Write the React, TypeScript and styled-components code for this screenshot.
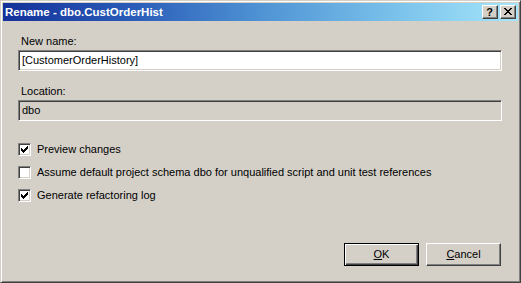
import React from "react";
import styled, { createGlobalStyle } from "styled-components";

const Global = createGlobalStyle`
  html, body { margin: 0; padding: 0; background: #d4d0c8; }
  body { font-family: Tahoma, "Liberation Sans", "DejaVu Sans", sans-serif; font-size: 11px; color: #000; }
  * { box-sizing: border-box; }
`;

const Window = styled.div`
  width: 521px;
  height: 283px;
  background: #d4d0c8;
  border: 1px solid;
  border-color: #d4d0c8 #404040 #404040 #d4d0c8;
  box-shadow: inset 1px 1px #ffffff, inset -1px -1px #808080;
  padding: 2px;
  display: flex;
  flex-direction: column;
`;

const TitleBar = styled.div`
  height: 18px;
  flex: none;
  display: flex;
  align-items: center;
  padding: 0 2px 0 2px;
  background: linear-gradient(to right, #14319a 0%, #2a5cb8 25%, #4f93d4 50%, #78c0ea 75%, #a6e6fb 100%);
`;

const Title = styled.div`
  flex: 1;
  color: #fff;
  font-family: Tahoma, "Liberation Sans", sans-serif;
  font-weight: bold;
  font-size: 11.5px;
  line-height: 18px;
  white-space: nowrap;
`;

const TitleButtons = styled.div`
  display: flex;
  gap: 2px;
`;

const CaptionButton = styled.div`
  width: 16px;
  height: 14px;
  background: #d4d0c8;
  border: 1px solid;
  border-color: #ffffff #404040 #404040 #ffffff;
  box-shadow: inset -1px -1px #808080;
  display: flex;
  align-items: center;
  justify-content: center;
  font-family: "Liberation Sans", sans-serif;
  font-weight: bold;
  font-size: 11px;
  line-height: 12px;
  padding-right: 1px;
  padding-bottom: 1px;
`;

const Body = styled.div`
  flex: 1;
  display: flex;
  flex-direction: column;
  padding: 14px 15px 0 15px;
`;

const Label = styled.div`
  line-height: 13px;
  padding-left: 3px;
  margin-bottom: 2px;
`;

const Field = styled.div<{ $readonly?: boolean }>`
  height: 21px;
  width: 484px;
  background: ${(p) => (p.$readonly ? "#d4d0c8" : "#ffffff")};
  border: 1px solid;
  border-color: #808080 #ffffff #ffffff #808080;
  box-shadow: inset 1px 1px #404040, inset -1px -1px #d4d0c8;
  padding: 3px 0 0 3px;
  line-height: 13px;
  white-space: nowrap;
`;

const Gap = styled.div<{ $h: number }>`
  height: ${(p) => p.$h}px;
  flex: none;
`;

const CheckRow = styled.div`
  display: flex;
  align-items: center;
  height: 13px;
  gap: 6px;
  margin-bottom: 10px;
`;

const Box = styled.div`
  width: 13px;
  height: 13px;
  flex: none;
  background: #fff;
  border: 1px solid;
  border-color: #808080 #ffffff #ffffff #808080;
  box-shadow: inset 1px 1px #404040, inset -1px -1px #d4d0c8;
  display: flex;
  align-items: center;
  justify-content: center;
`;

const CheckText = styled.span`
  line-height: 13px;
  white-space: nowrap;
`;

const Footer = styled.div`
  display: flex;
  justify-content: flex-end;
  gap: 7px;
  margin-top: auto;
  padding: 0 17px 14px 0;
`;

const Button = styled.div<{ $default?: boolean }>`
  width: 75px;
  height: 23px;
  background: #d4d0c8;
  border: 1px solid;
  border-color: ${(p) => (p.$default ? "#000" : "#ffffff #404040 #404040 #ffffff")};
  box-shadow: ${(p) =>
    p.$default
      ? "inset 1px 1px #ffffff, inset -1px -1px #404040, inset -2px -2px #808080"
      : "inset -1px -1px #808080"};
  display: flex;
  align-items: center;
  justify-content: center;
  line-height: 13px;
  padding-bottom: 1px;
`;

const U = styled.span`
  text-decoration: underline;
`;

function Check({ checked }: { checked: boolean }) {
  return (
    <Box>
      {checked && (
        <svg width="7" height="7" viewBox="0 0 7 7" shapeRendering="crispEdges">
          <path d="M0 2h1v3h-1z M1 3h1v3h-1z M2 4h1v3h-1z M3 3h1v3h-1z M4 2h1v3h-1z M5 1h1v3h-1z M6 0h1v3h-1z" fill="#000" />
        </svg>
      )}
    </Box>
  );
}

export default function App() {
  return (
    <>
      <Global />
      <Window>
        <TitleBar>
          <Title>Rename - dbo.CustOrderHist</Title>
          <TitleButtons>
            <CaptionButton>?</CaptionButton>
            <CaptionButton>
              <svg width="8" height="7" viewBox="0 0 8 7" shapeRendering="crispEdges">
                <path d="M0 0h2v1h-2z M1 1h2v1h-2z M2 2h1v1h-1z M3 3h2v1h-2z M2 4h1v1h-1z M1 5h2v1h-2z M0 6h2v1h-2z M6 0h2v1h-2z M5 1h2v1h-2z M5 2h1v1h-1z M5 4h1v1h-1z M5 5h2v1h-2z M6 6h2v1h-2z M3 2h2v1h-2z M3 4h2v1h-2z" fill="#000" />
              </svg>
            </CaptionButton>
          </TitleButtons>
        </TitleBar>
        <Body>
          <Label>New name:</Label>
          <Field>[CustomerOrderHistory]</Field>
          <Gap $h={14} />
          <Label>Location:</Label>
          <Field $readonly>dbo</Field>
          <Gap $h={22} />
          <CheckRow>
            <Check checked />
            <CheckText>Preview changes</CheckText>
          </CheckRow>
          <CheckRow>
            <Check checked={false} />
            <CheckText>Assume default project schema dbo for unqualified script and unit test references</CheckText>
          </CheckRow>
          <CheckRow>
            <Check checked />
            <CheckText>Generate refactoring log</CheckText>
          </CheckRow>
        </Body>
        <Footer>
          <Button $default>
            <span><U>O</U>K</span>
          </Button>
          <Button>
            <span><U>C</U>ancel</span>
          </Button>
        </Footer>
      </Window>
    </>
  );
}
